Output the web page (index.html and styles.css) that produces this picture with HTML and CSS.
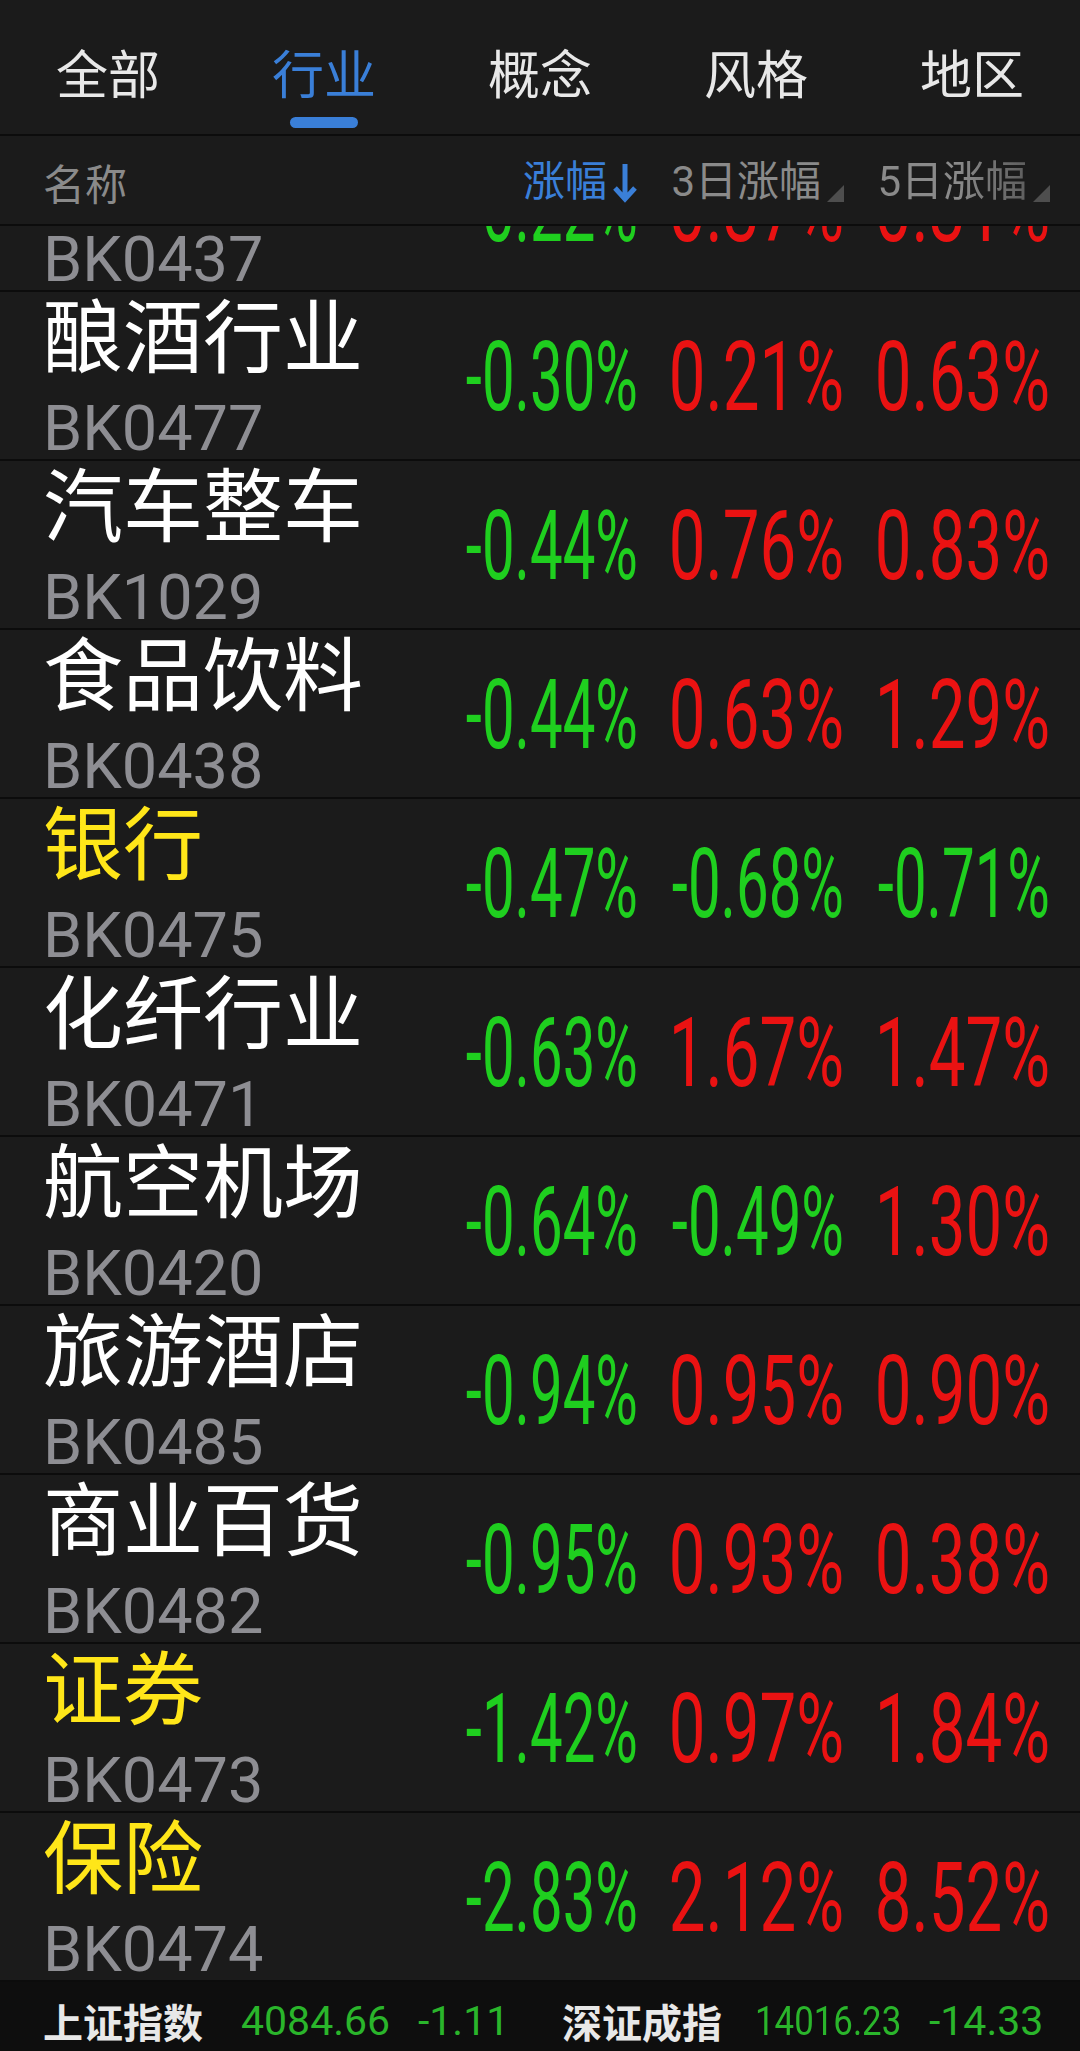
FILE: index.html
```html
<!DOCTYPE html>
<html lang="zh-CN">
<head>
<meta charset="utf-8">
<title>板块</title>
<link rel="stylesheet" href="styles.css">
</head>
<body>
<div class="app">
  <nav class="tabs">
    <div class="tab"><span class="tab-label">全部</span></div>
    <div class="tab active"><span class="tab-label">行业</span><span class="tab-bar"></span></div>
    <div class="tab"><span class="tab-label">概念</span></div>
    <div class="tab"><span class="tab-label">风格</span></div>
    <div class="tab"><span class="tab-label">地区</span></div>
  </nav>

  <div class="thead">
    <div class="th-name">名称</div>
    <div class="th active">涨幅<svg class="arrow" viewBox="0 0 26 42" width="26" height="42"><path d="M13 3 V38 M3 27 L13 38 L23 27" fill="none" stroke="#3a7fd8" stroke-width="5" stroke-linecap="butt" stroke-linejoin="miter"/></svg></div>
    <div class="th"><span class="th-text">3日涨幅</span><span class="tri"></span></div>
    <div class="th"><span class="th-text fade">5日涨幅</span><span class="tri"></span></div>
  </div>

  <div class="list">
    <div class="list-inner">
      <div class="row">
        <div class="name-col"><div class="name"></div><div class="code">BK0437</div></div>
        <div class="val"><span class="num down">-0.22%</span></div>
        <div class="val"><span class="num up len5">0.37%</span></div>
        <div class="val"><span class="num up len5">0.31%</span></div>
      </div>
      <div class="row">
        <div class="name-col"><div class="name">酿酒行业</div><div class="code">BK0477</div></div>
        <div class="val"><span class="num down">-0.30%</span></div>
        <div class="val"><span class="num up len5">0.21%</span></div>
        <div class="val"><span class="num up len5">0.63%</span></div>
      </div>
      <div class="row">
        <div class="name-col"><div class="name">汽车整车</div><div class="code">BK1029</div></div>
        <div class="val"><span class="num down">-0.44%</span></div>
        <div class="val"><span class="num up len5">0.76%</span></div>
        <div class="val"><span class="num up len5">0.83%</span></div>
      </div>
      <div class="row">
        <div class="name-col"><div class="name">食品饮料</div><div class="code">BK0438</div></div>
        <div class="val"><span class="num down">-0.44%</span></div>
        <div class="val"><span class="num up len5">0.63%</span></div>
        <div class="val"><span class="num up len5">1.29%</span></div>
      </div>
      <div class="row">
        <div class="name-col"><div class="name hl">银行</div><div class="code">BK0475</div></div>
        <div class="val"><span class="num down">-0.47%</span></div>
        <div class="val"><span class="num down">-0.68%</span></div>
        <div class="val"><span class="num down">-0.71%</span></div>
      </div>
      <div class="row">
        <div class="name-col"><div class="name">化纤行业</div><div class="code">BK0471</div></div>
        <div class="val"><span class="num down">-0.63%</span></div>
        <div class="val"><span class="num up len5">1.67%</span></div>
        <div class="val"><span class="num up len5">1.47%</span></div>
      </div>
      <div class="row">
        <div class="name-col"><div class="name">航空机场</div><div class="code">BK0420</div></div>
        <div class="val"><span class="num down">-0.64%</span></div>
        <div class="val"><span class="num down">-0.49%</span></div>
        <div class="val"><span class="num up len5">1.30%</span></div>
      </div>
      <div class="row">
        <div class="name-col"><div class="name">旅游酒店</div><div class="code">BK0485</div></div>
        <div class="val"><span class="num down">-0.94%</span></div>
        <div class="val"><span class="num up len5">0.95%</span></div>
        <div class="val"><span class="num up len5">0.90%</span></div>
      </div>
      <div class="row">
        <div class="name-col"><div class="name">商业百货</div><div class="code">BK0482</div></div>
        <div class="val"><span class="num down">-0.95%</span></div>
        <div class="val"><span class="num up len5">0.93%</span></div>
        <div class="val"><span class="num up len5">0.38%</span></div>
      </div>
      <div class="row">
        <div class="name-col"><div class="name hl">证券</div><div class="code">BK0473</div></div>
        <div class="val"><span class="num down">-1.42%</span></div>
        <div class="val"><span class="num up len5">0.97%</span></div>
        <div class="val"><span class="num up len5">1.84%</span></div>
      </div>
      <div class="row">
        <div class="name-col"><div class="name hl">保险</div><div class="code">BK0474</div></div>
        <div class="val"><span class="num down">-2.83%</span></div>
        <div class="val"><span class="num up len5">2.12%</span></div>
        <div class="val"><span class="num up len5">8.52%</span></div>
      </div>
    </div>
  </div>

  <footer class="footer">
    <span class="f-label w1">上证指数</span>
    <span class="f-num w2">4084.66</span>
    <span class="f-num w3">-1.11</span>
    <span class="f-label w4">深证成指</span>
    <span class="f-num w5"><span class="squeeze">14016.23</span></span>
    <span class="f-num">-14.33</span>
  </footer>
</div>
</body>
</html>
```

FILE: styles.css
```css
* { box-sizing: border-box; }

html, body {
  margin: 0;
  padding: 0;
  background: #1b1b1b;
}

body {
  font-family: "Noto Sans CJK SC", "Noto Sans", sans-serif;
  color: #ffffff;
}

.app {
  width: 1080px;
  height: 2051px;
  display: flex;
  flex-direction: column;
  overflow: hidden;
  background: #1b1b1b;
}

/* Tabs */
.tabs {
  height: 136px;
  display: grid;
  grid-template-columns: repeat(5, 1fr);
  border-bottom: 2px solid #0c0c0c;
  flex: none;
}

.tab {
  display: flex;
  flex-direction: column;
  align-items: center;
  padding-top: 46px;
}

.tab-label {
  font-size: 52px;
  line-height: 52px;
  color: #e8e8e8;
  font-family: "Noto Sans CJK SC", sans-serif;
}

.tab.active .tab-label {
  color: #3a7fd8;
}

.tab-bar {
  display: block;
  width: 68px;
  height: 11px;
  border-radius: 6px;
  background: #3a7fd8;
  margin-top: 19px;
}

/* Table header */
.thead {
  height: 90px;
  flex: none;
  display: flex;
  align-items: center;
  padding-right: 30px;
  border-bottom: 2px solid #0c0c0c;
  padding-top: 4px;
  position: relative;
  z-index: 1;
  background: #1b1b1b;
}

.th-name {
  flex: 1;
  padding-left: 43px;
  font-size: 42px;
  line-height: 48px;
  color: #8a8a8a;
}

.th {
  width: 206px;
  display: flex;
  justify-content: flex-end;
  align-items: flex-end;
  font-family: "Roboto", "Noto Sans CJK SC", sans-serif;
  font-size: 42px;
  line-height: 48px;
  color: #8a8a8a;
}

.th.active {
  color: #3a7fd8;
  align-items: center;
}

.arrow {
  margin-left: 5px;
  display: block;
}

.th-text.fade {
  -webkit-mask-image: linear-gradient(to right, #000 55%, rgba(0,0,0,0.6) 100%);
  mask-image: linear-gradient(to right, #000 55%, rgba(0,0,0,0.6) 100%);
}

.tri {
  width: 0;
  height: 0;
  border-left: 17px solid transparent;
  border-bottom: 17px solid #4e4e4e;
  margin-left: 6px;
  margin-bottom: 4px;
}

/* List */
.list {
  height: 1756px;
  flex: none;
  overflow: hidden;
}

.list-inner {
  margin-top: -103px;
}

.row {
  height: 169px;
  display: flex;
  padding-right: 30px;
  border-bottom: 2px solid #0c0c0c;
}

.name-col {
  flex: 1;
  padding-left: 43px;
  display: flex;
  flex-direction: column;
}

.name {
  font-size: 80px;
  line-height: 78px;
  height: 78px;
  color: #ffffff;
  white-space: nowrap;
}

.name.hl {
  color: #ffe619;
}

.code {
  font-family: "Roboto", sans-serif;
  font-size: 63px;
  line-height: 60px;
  color: #8e8e93;
  margin-top: 29px;
}

.val {
  width: 206px;
  display: flex;
  justify-content: flex-end;
  align-items: center;
  padding-top: 4px;
}

.num {
  display: inline-block;
  font-family: "Roboto", sans-serif;
  font-size: 97px;
  line-height: 97px;
  white-space: nowrap;
  transform: scaleX(0.6);
  transform-origin: right center;
}

.num.len5 {
  transform: scaleX(0.674);
}

.num.up { color: #ea1212; }
.num.down { color: #1fcf1f; }

/* Footer */
.footer {
  height: 69px;
  flex: 1;
  background: #0e0e0e;
  display: flex;
  align-items: center;
  padding-left: 43px;
  padding-top: 8px;
  white-space: nowrap;
}

.f-label {
  font-size: 40px;
  line-height: 44px;
  font-weight: 700;
  color: #e8e8e8;
}

.f-num {
  font-family: "Roboto", sans-serif;
  font-size: 41px;
  line-height: 44px;
  color: #2ab52b;
}

.squeeze {
  display: inline-block;
  transform: scaleX(0.85);
  transform-origin: left center;
}

.w1 { width: 198px; }
.w2 { width: 177px; }
.w3 { width: 144px; }
.w4 { width: 193px; }
.w5 { width: 174px; }
```
